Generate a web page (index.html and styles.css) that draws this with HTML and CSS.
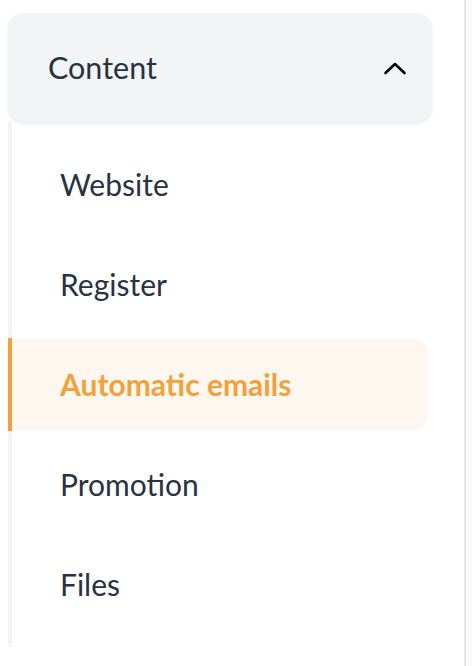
FILE: index.html
```html
<!DOCTYPE html>
<html lang="en">
<head>
<meta charset="utf-8">
<link rel="stylesheet" href="styles.css">
</head>
<body>
<div class="page">
  <aside class="sidebar">
    <div class="section-header">
      <span class="section-title">Content</span>
      <svg class="chevron" width="24" height="16" viewBox="0 0 24 16" aria-hidden="true">
        <path d="M2.5 13 L12 4 L21.5 13" fill="none" stroke="#000" stroke-width="2.6" stroke-linecap="round" stroke-linejoin="round"/>
      </svg>
    </div>
    <nav class="menu">
      <a class="menu-item">Website</a>
      <a class="menu-item">Register</a>
      <a class="menu-item active">Automatic emails</a>
      <a class="menu-item">Promotion</a>
      <a class="menu-item">Files</a>
    </nav>
  </aside>
  <div class="rest"></div>
</div>
</body>
</html>
```
FILE: styles.css
```css
html, body {
  margin: 0;
  padding: 0;
  background: #ffffff;
}
body {
  font-family: Lato, "Open Sans", sans-serif;
  color: #283241;
}
.page {
  display: flex;
  height: 666px;
}
.sidebar {
  width: 424px;
  padding: 13px 32px 0 8px;
  border-right: 2px solid #e6e6e6;
  background: #ffffff;
}
.rest {
  flex: 1;
  background: #f9f9f9;
}
.section-header {
  height: 109px;
  box-sizing: border-box;
  display: flex;
  align-items: center;
  justify-content: space-between;
  padding: 0 25px 0 40px;
  background: #f3f4f6;
  border-radius: 16px;
  box-shadow: 0 2px 4px rgba(0, 0, 0, 0.09);
  position: relative;
  z-index: 1;
}
.section-title {
  font-size: 30.5px;
  font-weight: 400;
  color: #283241;
  padding-bottom: 2px;
}
.chevron {
  display: block;
}
.menu {
  width: 416px;
  border-left: 4px solid #f3f4f6;
  padding: 16px 0 16px 0;
  display: flex;
  flex-direction: column;
  gap: 7px;
}
.menu-item {
  height: 93px;
  box-sizing: border-box;
  display: flex;
  align-items: center;
  padding-left: 48px;
  padding-bottom: 2px;
  font-size: 30px;
  font-weight: 400;
  color: #283241;
  border-radius: 0 16px 16px 0;
}
.menu-item.active {
  margin-left: -4px;
  padding-left: 48px;
  border-left: 4px solid #f2a13d;
  background: #fef7f0;
  color: #f2a13d;
  font-weight: 700;
}
```
